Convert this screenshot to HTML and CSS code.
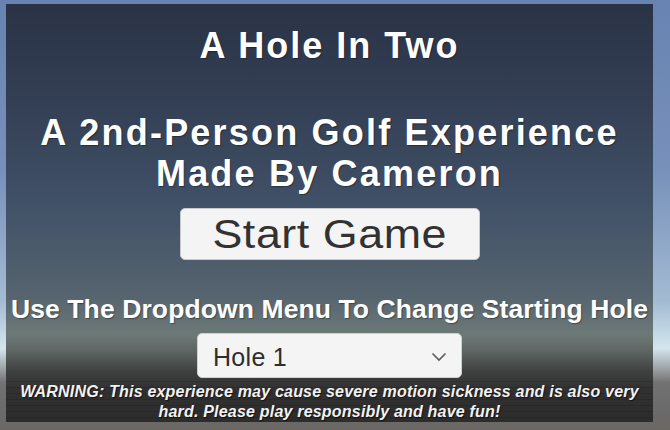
FILE: index.html
```html
<!DOCTYPE html>
<html>
<head>
<meta charset="utf-8">
<link rel="stylesheet" href="styles.css">
</head>
<body>
<main class="panel">
  <h1 class="title">A Hole In Two</h1>
  <p class="subtitle">A 2nd-Person Golf Experience<br>Made By Cameron</p>
  <button class="start"><span class="start-label">Start Game</span></button>
  <p class="hint">Use The Dropdown Menu To Change Starting Hole</p>
  <div class="dropdown">
    <span class="dropdown-label">Hole 1</span>
    <svg class="chevron" width="16" height="10" viewBox="0 0 16 10"><path d="M1.5 1.5 L8 8 L14.5 1.5" fill="none" stroke="#5a5a5a" stroke-width="1.6"/></svg>
  </div>
  <p class="warning">WARNING: This experience may cause severe motion sickness and is also very<br>hard. Please play responsibly and have fun!</p>
</main>
</body>
</html>
```
FILE: styles.css
```css
html, body {
  margin: 0;
  padding: 0;
}
body {
  width: 670px;
  height: 430px;
  overflow: hidden;
  font-family: "Liberation Sans", Arial, sans-serif;
  background: linear-gradient(to bottom,
    #6883b1 0%,
    #7891bb 40%,
    #a3bbd2 70%,
    #d3e6ee 81%,
    #a7adb0 85%,
    #727272 89%,
    #6b6b6b 95%,
    #6b6764 100%);
}
.panel {
  box-sizing: border-box;
  width: 647px;
  height: 418px;
  margin: 4px 0 0 6px;
  display: flex;
  flex-direction: column;
  align-items: center;
  color: #fff;
  background:
    repeating-linear-gradient(to bottom, transparent 0, transparent 5px, rgba(0,0,0,0.12) 5px, rgba(0,0,0,0.12) 6px) 0 372px / 100% 46px no-repeat,
    linear-gradient(to bottom,
      #2a3346 0%,
      #344055 25%,
      #405067 47%,
      #56646f 70%,
      #6d7977 79%,
      #5e6663 83%,
      #3e403f 88%,
      #313131 92%,
      #2c2c2c 100%);
}
.title {
  margin: 21px 0 0;
  font-size: 36px;
  line-height: 41px;
  font-weight: bold;
  letter-spacing: 2px;
  text-shadow: 1px 1px 1px rgba(0,0,0,0.35);
}
.subtitle {
  margin: 46px 0 0;
  font-size: 36px;
  line-height: 41px;
  font-weight: bold;
  letter-spacing: 2.2px;
  text-align: center;
  text-shadow: 1px 1px 1px rgba(0,0,0,0.35);
}
.start {
  margin-top: 14px;
  width: 300px;
  height: 52px;
  padding: 0;
  border: 1px solid #c9c9c9;
  border-radius: 5px;
  background: #f4f4f4;
  color: #323232;
  font-family: "Liberation Sans", Arial, sans-serif;
  font-size: 40px;
  line-height: 50px;
}
.start-label {
  display: inline-block;
  letter-spacing: 0.5px;
  transform: scaleX(1.12);
}
.hint {
  margin: 34px 0 0;
  font-size: 26.5px;
  line-height: 30px;
  font-weight: bold;
  letter-spacing: 0.1px;
  white-space: nowrap;
  text-shadow: 1px 1px 1px rgba(0,0,0,0.35);
}
.dropdown {
  margin-top: 9px;
  box-sizing: border-box;
  width: 265px;
  height: 45px;
  padding: 2px 14px 0 15px;
  display: flex;
  align-items: center;
  justify-content: space-between;
  background: #f4f4f4;
  border: 1px solid #d0d0d0;
  border-radius: 5px;
  color: #2e2e2e;
}
.dropdown-label {
  font-size: 25px;
  line-height: 30px;
  letter-spacing: 0.3px;
}
.chevron {
  display: block;
}
.warning {
  margin: 4px 0 0;
  font-size: 16px;
  line-height: 20px;
  font-weight: bold;
  font-style: italic;
  letter-spacing: 0.2px;
  text-align: center;
  white-space: nowrap;
  color: #f2f2f2;
  text-shadow: 1px 1px 1px rgba(0,0,0,0.6);
}
```
